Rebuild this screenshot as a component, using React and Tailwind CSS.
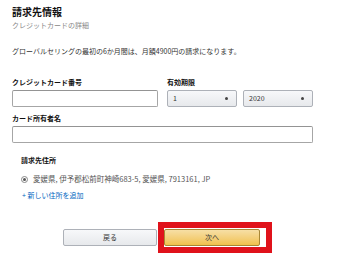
export default function App() {
  const jp = { fontFamily: '"Noto Sans CJK JP", "Noto Sans", sans-serif' };
  const Select = ({ value }) => (
    <div className="w-[70px] h-[17px] flex items-center justify-between px-[5px] bg-gradient-to-b from-[#f7f8fa] to-[#e7e9ec] border border-[#adb1b8] rounded-[2px] text-[7px] text-[#333]">
      <span>{value}</span>
      <span className="w-[3px] h-[3px] rounded-full bg-[#444] mr-[3px]" />
    </div>
  );
  return (
    <div className="w-[340px] h-[270px] bg-white overflow-hidden pl-[12px]" style={jp}>
      <div className="pt-[5px] text-[10px] leading-[14px] font-bold text-[#111]">請求先情報</div>
      <div className="mt-[1px] text-[7px] leading-[10px] text-[#888]">クレジットカードの詳細</div>
      <div className="mt-[15px] text-[7px] leading-[12px] text-[#333]">
        グローバルセリングの最初の6か月間は、月額4900円の請求になります。
      </div>
      <div className="mt-[20px] flex">
        <div className="w-[146px]">
          <div className="text-[7px] leading-[10px] font-bold text-[#111]">クレジットカード番号</div>
          <div className="mt-[3px] h-[17px] border border-[#a6a6a6] border-t-[#949494] rounded-[2px] bg-white" />
        </div>
        <div className="ml-[9px]">
          <div className="text-[7px] leading-[10px] font-bold text-[#111]">有効期限</div>
          <div className="mt-[3px] flex gap-[6px]">
            <Select value="1" />
            <Select value="2020" />
          </div>
        </div>
      </div>
      <div className="mt-[6px] text-[7px] leading-[10px] font-bold text-[#111]">カード所有者名</div>
      <div className="mt-[3px] w-[301px] h-[17px] border border-[#a6a6a6] border-t-[#949494] rounded-[2px] bg-white" />
      <div className="pl-[9px]">
        <div className="mt-[12px] text-[7px] leading-[10px] font-bold text-[#111]">請求先住所</div>
        <div className="mt-[9px] flex items-center text-[7.5px] leading-[10px] text-[#555]">
          <span className="w-[7px] h-[7px] rounded-full border border-[#888] flex items-center justify-center">
            <span className="w-[3px] h-[3px] rounded-full bg-[#555]" />
          </span>
          <span className="ml-[5px]">愛媛県, 伊予郡松前町神崎683-5, 愛媛県, 7913161, JP</span>
        </div>
        <div className="mt-[6px] ml-[1px] text-[7px] leading-[10px] text-[#0066c0]">+ 新しい住所を追加</div>
      </div>
      <div className="mt-[22px] flex items-center">
        <div className="ml-[51px] w-[94px] h-[17px] flex items-center justify-center bg-gradient-to-b from-[#f7f8fa] to-[#e7e9ec] border border-[#adb1b8] rounded-[2px] text-[7px] text-[#333]">
          戻る
        </div>
        <div className="ml-[1px] border-[6px] border-[#e0121b] pr-[6px] py-[1px]">
          <div className="w-[96px] h-[17px] flex items-center justify-center bg-gradient-to-b from-[#f7dfa5] to-[#f0c14b] border border-[#a88734] rounded-[2px] text-[7px] text-[#333]">
            次へ
          </div>
        </div>
      </div>
    </div>
  );
}
